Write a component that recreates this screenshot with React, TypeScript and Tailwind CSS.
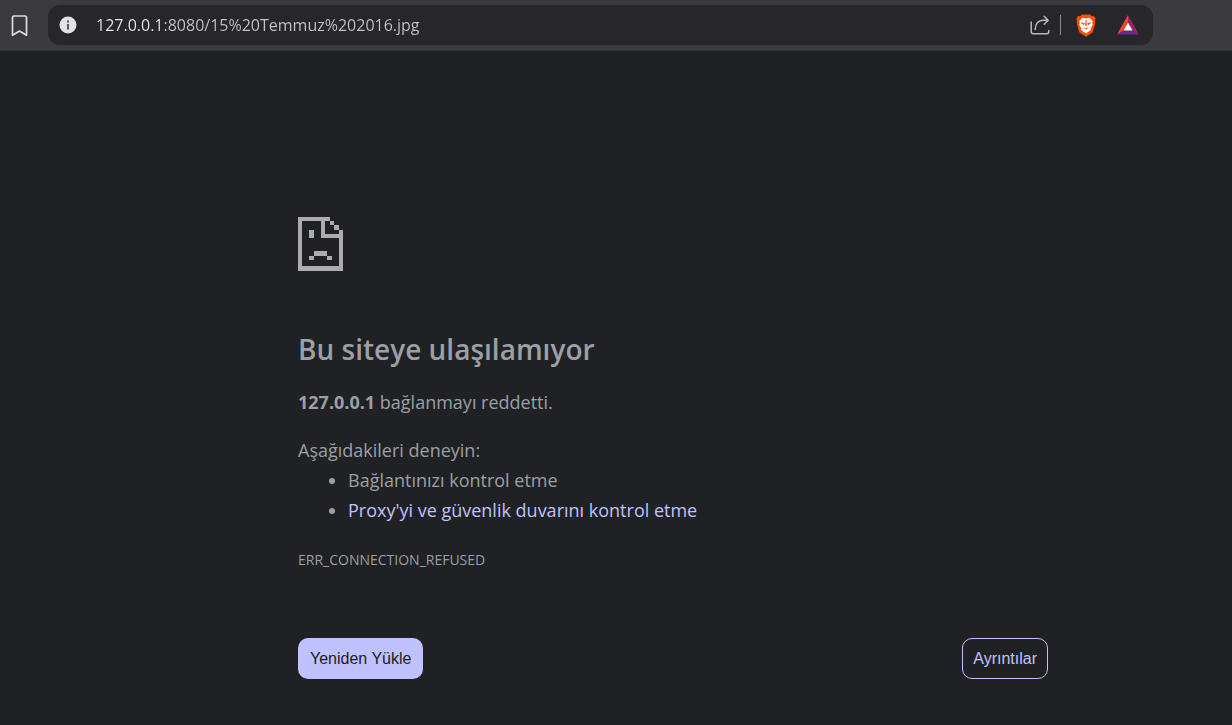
import { useState } from "react";

const BookmarkIcon = () => (
  <svg viewBox="0 0 18 24" className="h-6 w-[18px]" fill="none" stroke="#dddce2">
    <path
      d="M4 3h11a1.500 1.500 0 0 1 1.500 1.500v17.700L9.500 18l-7 4.200V4.500A1.500 1.500 0 0 1 4 3z"
      strokeWidth="1.7"
      strokeLinejoin="round"
    />
  </svg>
);

const InfoIcon = () => (
  <svg viewBox="0 0 18 18" className="size-[18px]">
    <circle cx="9" cy="9" r="8.5" fill="#e3e2e8" />
    <path d="M8 4.5h2v2H8zM8 8h2v5.5H8z" fill="#55555a" />
  </svg>
);

const ShareIcon = () => (
  <svg
    viewBox="0 0 20 20"
    className="size-5"
    fill="none"
    stroke="#b9b9c0"
    strokeWidth="1.5"
    strokeLinecap="round"
    strokeLinejoin="round"
  >
    <path d="M1.2 7v9.8a2 2 0 0 0 2 2h13.6a2 2 0 0 0 2-2v-1.3" />
    <path d="M5.2 14.5c0-5.5 3-9.3 8.500-9.3h4.500M14.200 1.200l4 4-4 4" />
  </svg>
);

const BraveIcon = () => (
  <svg viewBox="0 0 20 23" className="h-[23px] w-5">
    <path
      d="M6 0.500h8L15.800 2.300l2-.3L19.700 4.600l-.8 2 .5 1.600-2.200 8.600c-.4 1.300-1.200 2.100-2.200 2.800L10 22.800l-5-3.200c-1-.7-1.800-1.500-2.200-2.800L.6 8.200l.5-1.600-.8-2L2.200 2l2 .3z"
      fill="#ff5000"
    />
    <path
      d="M6.500 3.700l3.500.7 3.500-.7 3.400 3.500-.9 1.200.9 2.300-2.200 3.300.3 1.800-5 3.700-5-3.700.3-1.800-2.200-3.300.9-2.300-.9-1.200z"
      fill="#fff"
    />
    <path
      d="M5.300 8.200l3.400 1.100-.6 2-2.600-1.500zM14.700 8.200l-3.400 1.100.6 2 2.600-1.500zM9.500 5.800h1l.3 5.600-.8 1-.8-1zM7.600 13.300l2.400 1.200 2.400-1.200-.5 1-1.900 1.500-1.900-1.500z"
      fill="#ff5000"
    />
  </svg>
);

const RewardsIcon = () => (
  <svg viewBox="0 0 24 20" className="h-5 w-6">
    <path d="M12 0 12 7 7.5 15.5 1 19.5z" fill="#ff4724" />
    <path d="M12 0 23 19.5 16.5 15.5 12 7z" fill="#9e1f63" />
    <path d="M1 19.5 7.5 15.5h9L23 19.5z" fill="#662d91" />
    <path d="M12 7.5 16.5 15.5h-9z" fill="#fff" />
  </svg>
);

const SadPageIcon = () => (
  <svg
    viewBox="0 0 135 165"
    className="h-[55px] w-[45px]"
    fill="#acacac"
    shapeRendering="crispEdges"
  >
    <path d="M0 2H96V14H82V53H122V41H135V165H0zM13 14V151H122V66H69V14z" fillRule="evenodd" />
    <path d="M96 14h12v13H96zM108 27h14v14h-14z" />
    <path d="M33 41h14v25H33zM47 106h41v13H47zM33 119h14v13H33zM88 119h14v13H88z" />
  </svg>
);

const Toolbar = () => {
  const [url, setUrl] = useState("127.0.0.1:8080/15%20Temmuz%202016.jpg");

  return (
    <header className="flex h-[51px] items-center border-b border-[#333338] bg-[#3b3a3f] pr-[79px] pl-[10px]">
      <button aria-label="Yer işareti ekle">
        <BookmarkIcon />
      </button>
      <div className="ml-5 flex h-10 flex-1 items-center rounded-xl bg-[#26262b] pr-[13px] pl-[11px]">
        <button aria-label="Site bilgileri">
          <InfoIcon />
        </button>
        <input
          aria-label="Adres"
          value={url}
          onChange={(e) => setUrl(e.target.value)}
          className="ml-[19px] min-w-0 flex-1 bg-linear-to-r from-[#ececf0] from-[65px] to-[#c3c3c9] to-[65px] bg-clip-text text-base text-transparent outline-none"
        />
        <button aria-label="Paylaş">
          <ShareIcon />
        </button>
        <span className="mr-[15px] ml-[10px] h-5 w-px bg-[#8a8a90]" />
        <button aria-label="Brave Shields">
          <BraveIcon />
        </button>
        <button aria-label="Brave Rewards" className="ml-5">
          <RewardsIcon />
        </button>
      </div>
    </header>
  );
};

const App = () => {
  return (
    <div className="min-h-screen bg-[#202124] font-['Open_Sans',sans-serif] text-[#9aa0a6]">
      <Toolbar />
      <main className="ml-[298px] max-w-[750px] pt-[165px] text-[18px] leading-[30px]">
        <SadPageIcon />
        <h1 className="mt-[60px] text-[28px] leading-9 font-semibold">
          Bu siteye ulaşılamıyor
        </h1>
        <p className="mt-5">
          <strong>127.0.0.1</strong> bağlanmayı reddetti.
        </p>
        <p className="mt-[18px]">Aşağıdakileri deneyin:</p>
        <ul className="list-disc pl-[50px]">
          <li>Bağlantınızı kontrol etme</li>
          <li>
            <a href="#buttons" className="text-[#c0c1ff]">
              Proxy'yi ve güvenlik duvarını kontrol etme
            </a>
          </li>
        </ul>
        <div className="mt-5 text-[14px]">ERR_CONNECTION_REFUSED</div>
        <div
          id="buttons"
          className="mt-[63px] flex justify-between font-['Liberation_Sans',sans-serif] text-base"
        >
          <button className="h-[41px] rounded-[10px] bg-[#c0c1ff] px-3 text-[#202124]">
            Yeniden Yükle
          </button>
          <button className="h-[41px] rounded-[10px] border border-[#c0c1ff] px-[10px] text-[#c0c1ff]">
            Ayrıntılar
          </button>
        </div>
      </main>
    </div>
  );
};

export default App;
